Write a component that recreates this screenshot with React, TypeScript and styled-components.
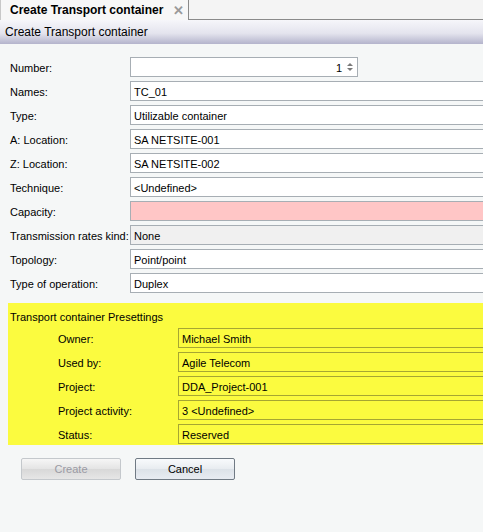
import React from "react";
import styled, { createGlobalStyle } from "styled-components";

const GlobalStyle = createGlobalStyle`
  html, body {
    margin: 0;
    padding: 0;
    background: #f5f7f7;
  }
  body {
    font-family: "Liberation Sans", Arial, sans-serif;
    font-size: 11px;
    color: #000;
  }
`;

const Page = styled.div`
  width: 483px;
  height: 532px;
  overflow: hidden;
  display: flex;
  flex-direction: column;
  background: #f5f7f7;
`;

const TabBar = styled.div`
  height: 19px;
  display: flex;
  background: #f4f4f4;
  border-bottom: 1px solid #8a8a8a;
  box-sizing: content-box;
`;

const Tab = styled.div`
  width: 189px;
  height: 20px;
  margin-bottom: -1px;
  display: flex;
  align-items: center;
  gap: 10px;
  padding-left: 9px;
  box-sizing: border-box;
  background: #f7f7f7;
  border-right: 1px solid #8a8a8a;
  border-left: 1px solid #c8c8c8;
  font-weight: bold;
  font-size: 12px;
`;

const CloseX = styled.span`
  color: #9a9a9a;
  font-weight: bold;
  font-size: 13px;
`;

const Header = styled.div`
  height: 24px;
  display: flex;
  align-items: center;
  padding-left: 5px;
  font-size: 12px;
  background: linear-gradient(#f6f6fa 0%, #e4e4ee 55%, #b4b4cc 100%);
`;

const Form = styled.div`
  padding: 13px 0 0 0;
  display: flex;
  flex-direction: column;
  gap: 4px;
`;

const Row = styled.div<{ $labelWidth: number; $indent: number }>`
  display: grid;
  grid-template-columns: ${(p) => p.$labelWidth}px 1fr;
  padding-left: ${(p) => p.$indent}px;
  height: 20px;
  align-items: center;
`;

const Label = styled.div`
  white-space: nowrap;
  padding-top: 2px;
`;

const Field = styled.div<{ $bg?: string; $border?: string; $width?: number }>`
  height: 20px;
  box-sizing: border-box;
  border: 1px solid ${(p) => p.$border || "#a7aeb4"};
  border-right: ${(p) => (p.$width ? undefined : "none")};
  background: ${(p) => p.$bg || "#fff"};
  width: ${(p) => (p.$width ? `${p.$width}px` : "auto")};
  display: flex;
  align-items: center;
  padding: 2px 0 0 3px;
  white-space: nowrap;
`;

const NumberValue = styled.span`
  margin-left: auto;
  margin-right: 5px;
`;

const Spinner = styled.div`
  display: flex;
  flex-direction: column;
  gap: 2px;
  margin: -2px 4px 0 0;
`;

const Arrow = styled.div<{ $up?: boolean }>`
  width: 0;
  height: 0;
  border-left: 3px solid transparent;
  border-right: 3px solid transparent;
  ${(p) =>
    p.$up
      ? "border-bottom: 3px solid #7a7a7a;"
      : "border-top: 3px solid #7a7a7a;"}
`;

const Preset = styled.div`
  margin: 10px 0 0 8px;
  padding: 6px 0 1px 0;
  background: #fbfb3f;
  display: flex;
  flex-direction: column;
  gap: 4px;
`;

const PresetTitle = styled.div`
  padding: 1px 0 0 2px;
  height: 14px;
  line-height: 14px;
`;

const Buttons = styled.div`
  display: flex;
  gap: 14px;
  padding: 13px 0 0 21px;
`;

const Button = styled.button<{ $disabled?: boolean }>`
  width: 100px;
  height: 22px;
  font-family: "Liberation Sans", Arial, sans-serif;
  font-size: 11px;
  border-radius: 2px;
  border: 1px solid ${(p) => (p.$disabled ? "#c4c8cc" : "#707a84")};
  color: ${(p) => (p.$disabled ? "#9a9aa4" : "#000")};
  background: ${(p) =>
    p.$disabled
      ? "linear-gradient(#f6f6f6, #e4e4e4 50%, #d8d8d8 51%, #e6e6e6)"
      : "linear-gradient(#f8fafc, #e8ecf0 50%, #dce2e8 51%, #e8ecf2)"};
  padding: 0;
`;

const mainRows: { label: string; value: string; bg?: string }[] = [
  { label: "Names:", value: "TC_01" },
  { label: "Type:", value: "Utilizable container" },
  { label: "A: Location:", value: "SA NETSITE-001" },
  { label: "Z: Location:", value: "SA NETSITE-002" },
  { label: "Technique:", value: "<Undefined>" },
  { label: "Capacity:", value: "", bg: "#ffc6c6" },
  { label: "Transmission rates kind:", value: "None", bg: "#f0f0f0" },
  { label: "Topology:", value: "Point/point" },
  { label: "Type of operation:", value: "Duplex" },
];

const presetRows = [
  { label: "Owner:", value: "Michael Smith" },
  { label: "Used by:", value: "Agile Telecom" },
  { label: "Project:", value: "DDA_Project-001" },
  { label: "Project activity:", value: "3 <Undefined>" },
  { label: "Status:", value: "Reserved" },
];

export default function App() {
  return (
    <Page>
      <GlobalStyle />
      <TabBar>
        <Tab>
          Create Transport container
          <CloseX>✕</CloseX>
        </Tab>
      </TabBar>
      <Header>Create Transport container</Header>
      <Form>
        <Row $labelWidth={120} $indent={10}>
          <Label>Number:</Label>
          <Field $width={228}>
            <NumberValue>1</NumberValue>
            <Spinner>
              <Arrow $up />
              <Arrow />
            </Spinner>
          </Field>
        </Row>
        {mainRows.map((r) => (
          <Row key={r.label} $labelWidth={120} $indent={10}>
            <Label>{r.label}</Label>
            <Field $bg={r.bg}>{r.value}</Field>
          </Row>
        ))}
      </Form>
      <Preset>
        <PresetTitle>Transport container Presettings</PresetTitle>
        {presetRows.map((r) => (
          <Row key={r.label} $labelWidth={120} $indent={50}>
            <Label>{r.label}</Label>
            <Field $bg="#fbfb3f" $border="#a6a632">
              {r.value}
            </Field>
          </Row>
        ))}
      </Preset>
      <Buttons>
        <Button $disabled disabled>
          Create
        </Button>
        <Button>Cancel</Button>
      </Buttons>
    </Page>
  );
}
